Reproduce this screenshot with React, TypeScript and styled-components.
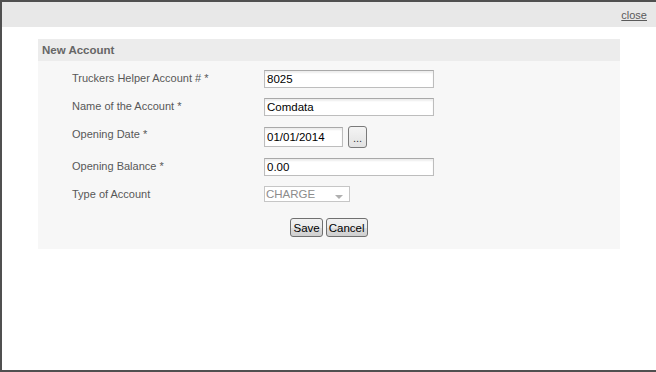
import React from 'react';
import styled, {createGlobalStyle} from "styled-components";

const GlobalStyle = createGlobalStyle`
  html, body {
    margin: 0;
    padding: 0;
    background: #ffffff;
    font-family: "Liberation Sans", Arial, sans-serif;
  }
`

const fields = [
    {label: 'Truckers Helper Account # *', value: '8025'},
    {label: 'Name of the Account *', value: 'Comdata'},
]

export default function App() {
    return (
        <>
            <GlobalStyle/>
            <Window>
                <TitleBar>
                    <CloseLink href="#">close</CloseLink>
                </TitleBar>
                <Body>
                    <Panel>
                        <PanelHeader>New Account</PanelHeader>
                        <Form>
                            {fields.map(f => (
                                <React.Fragment key={f.label}>
                                    <Label>{f.label}</Label>
                                    <Field><TextBox width={170} defaultValue={f.value}/></Field>
                                </React.Fragment>
                            ))}
                            <Label>Opening Date *</Label>
                            <Field>
                                <TextBox width={79} height={20} defaultValue="01/01/2014"/>
                                <PickerButton>...</PickerButton>
                            </Field>
                            <Label>Opening Balance *</Label>
                            <Field><TextBox width={170} defaultValue="0.00"/></Field>
                            <Label>Type of Account</Label>
                            <Field>
                                <FakeSelect>
                                    <span>CHARGE</span>
                                    <Arrow/>
                                </FakeSelect>
                            </Field>
                        </Form>
                        <Actions>
                            <Button>Save</Button>
                            <Button>Cancel</Button>
                        </Actions>
                    </Panel>
                </Body>
            </Window>
        </>
    );
}

const Window = styled.div`
  box-sizing: border-box;
  width: 656px;
  height: 372px;
  border-left: 2px solid #505050;
  border-top: 2px solid #505050;
  border-bottom: 2px solid #505050;
  background: #ffffff;
  display: flex;
  flex-direction: column;
`

const TitleBar = styled.div`
  height: 25px;
  background: #e8e8e8;
  display: flex;
  justify-content: flex-end;
  align-items: center;
  padding-right: 9px;
`

const CloseLink = styled.a`
  font-size: 11px;
  color: #5a5a5a;
  text-decoration: underline;
  margin-top: 1px;
`

const Body = styled.div`
  padding: 12px 36px;
`

const Panel = styled.div`
  background: #f7f7f7;
  padding-bottom: 12px;
`

const PanelHeader = styled.div`
  height: 22px;
  line-height: 22px;
  background: #ececec;
  padding-left: 4px;
  font-size: 11.5px;
  font-weight: bold;
  color: #666666;
`

const Form = styled.div`
  display: grid;
  grid-template-columns: 192px 1fr;
  row-gap: 10px;
  padding: 9px 0 0 34px;
`

const Label = styled.div`
  font-size: 11px;
  color: #575757;
  padding-top: 2px;
  line-height: 13px;
`

const Field = styled.div`
  display: flex;
  align-items: center;
  gap: 5px;
`

const TextBox = styled.input<{ width: number, height?: number }>`
  box-sizing: border-box;
  width: ${p => p.width}px;
  height: ${p => p.height ?? 18}px;
  margin: 0;
  padding: 0 2px;
  border: 1px solid #bdbdbd;
  border-top-color: #a9a9a9;
  box-shadow: inset 0 2px 2px rgba(0, 0, 0, 0.07);
  background: #ffffff;
  font-family: "Liberation Sans", Arial, sans-serif;
  font-size: 11.5px;
  color: #000000;
  outline: none;
`

const PickerButton = styled.button`
  box-sizing: border-box;
  width: 19px;
  height: 22px;
  padding: 0 0 3px;
  border: 1px solid #7a7a7a;
  border-radius: 3px;
  background: linear-gradient(#f4f4f4, #e2e2e2);
  font-family: "Liberation Sans", Arial, sans-serif;
  font-size: 11px;
  color: #333333;
  display: flex;
  align-items: flex-end;
  justify-content: center;
`

const FakeSelect = styled.div`
  box-sizing: border-box;
  width: 86px;
  height: 16px;
  border: 1px solid #c6c6c6;
  background: #ffffff;
  display: flex;
  align-items: center;
  justify-content: space-between;
  padding: 0 6px 0 1px;
  font-size: 11.5px;
  color: #8c8c8c;
`

const Arrow = styled.span`
  width: 0;
  height: 0;
  margin-top: 5px;
  border-left: 4px solid transparent;
  border-right: 4px solid transparent;
  border-top: 4px solid #b0b0b0;
`

const Actions = styled.div`
  display: flex;
  justify-content: center;
  gap: 3px;
  margin-top: 16px;
`

const Button = styled.button`
  box-sizing: border-box;
  height: 19px;
  padding: 0 2px;
  border: 1px solid #707070;
  border-radius: 3px;
  background: linear-gradient(#f2f2f2 0%, #ebebeb 50%, #dddddd 51%, #cfcfcf 100%);
  font-family: "Liberation Sans", Arial, sans-serif;
  font-size: 11.5px;
  color: #000000;
`
